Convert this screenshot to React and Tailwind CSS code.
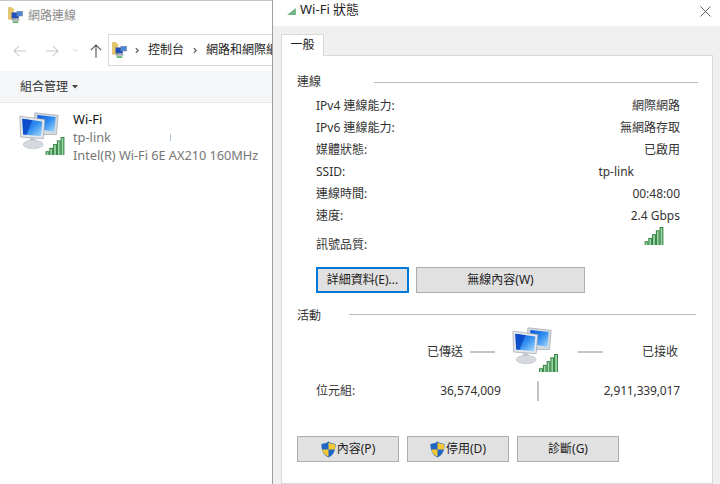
import React from "react";

const Font = '[font-family:"Noto_Sans","Noto_Sans_CJK_TC",sans-serif]';

function Computers({ className }) {
  return (
    <svg viewBox="0 0 48 48" className={className}>
      <defs>
        <linearGradient id="scr" x1="0" y1="0" x2="1" y2="1">
          <stop offset="0" stopColor="#0a4fd8" />
          <stop offset="0.5" stopColor="#2f8df0" />
          <stop offset="1" stopColor="#a9dcfb" />
        </linearGradient>
      </defs>
      <path d="M19 1 L47 4 L45 27 L30 27 L18 20Z" fill="#d5dadf" stroke="#9aa3ab" strokeWidth="0.8" />
      <path d="M22 3.5 L44 6 L42.5 24 L22 20Z" fill="url(#scr)" />
      <path d="M1 5 L31 9 L29 32 L2 30Z" fill="#e4e8ec" stroke="#98a1a9" strokeWidth="0.8" />
      <path d="M4 8 L28 11.5 L26.5 29 L5 27Z" fill="url(#scr)" />
      <path d="M4 8 L16 9.8 L9 27.4 L5 27Z" fill="#0b45c4" opacity="0.8" />
      <path d="M13 31 L20 31.5 L20 36 L13 36Z" fill="#c4c9ce" />
      <ellipse cx="17" cy="39" rx="12" ry="5" fill="#d6dade" stroke="#b2b8be" strokeWidth="0.6" />
    </svg>
  );
}

function Signal({ className }) {
  const bars = [
    [0, 19, 5],
    [5, 14.5, 9.5],
    [10, 9.5, 14.5],
    [15, 4.5, 19.5],
    [20, 0, 24],
  ];
  return (
    <svg viewBox="0 0 25 24" className={className}>
      {bars.map(([x, y, h], i) => (
        <g key={i}>
          <rect x={x} y={y} width={5} height={h} fill="#2c7a3a" />
          <rect x={x + 1.3} y={y + 1.2} width={2.4} height={h - 1.2} fill="#9ad8a5" />
        </g>
      ))}
    </svg>
  );
}

function Shield() {
  return (
    <svg viewBox="0 0 16 18" className="w-[15px] h-[17px] shrink-0">
      <path d="M8 0.5 C10 2 12.5 2.8 15.5 3 C15.8 10 13 15 8 17.5 C3 15 0.2 10 0.5 3 C3.5 2.8 6 2 8 0.5Z" fill="#1f66c4" />
      <path d="M8 1.5 V9 H15 C15.2 7 15.1 5 15 3.4 C12.5 3.2 10 2.6 8 1.5Z" fill="#f7c633" />
      <path d="M8 9 V16.8 C4.5 15 2 12.5 1.2 9Z" fill="#f7c633" />
    </svg>
  );
}

function FolderNet({ className }) {
  return (
    <svg viewBox="0 0 16 18" className={className}>
      <path d="M0.5 0.5 H4 L5 2 H6 V13 H0.5Z" fill="#e9c766" stroke="#c9a548" strokeWidth="0.5" />
      <rect x="4" y="6" width="7.5" height="6" fill="#1f4fb8" stroke="#6f7f96" strokeWidth="0.6" />
      <rect x="9.5" y="4.5" width="6" height="5" fill="#4a86dc" stroke="#6f7f96" strokeWidth="0.6" />
      <rect x="4" y="13" width="8" height="1.4" fill="#8a929a" />
      <rect x="5" y="15.2" width="6" height="1.6" fill="#41a85a" />
    </svg>
  );
}

function Chevron() {
  return (
    <svg viewBox="0 0 5 8" className="w-[4px] h-[7px] shrink-0" fill="none" stroke="#555" strokeWidth="1.5">
      <path d="M1 1l3 3-3 3" />
    </svg>
  );
}

function Row({ label, value, valueClass = "" }) {
  return (
    <div className="flex h-[22px] items-center justify-between pl-[19px] pr-[18px]">
      <span>{label}</span>
      <span className={valueClass}>{value}</span>
    </div>
  );
}

function Btn({ w, children, focus }) {
  return (
    <button
      className={`${w} h-[26px] flex items-center justify-center gap-[1px] bg-[#e1e1e1] text-[#222] text-[12px] border ${
        focus ? "border-[#0078d7] border-2" : "border-[#adadad]"
      }`}
    >
      {children}
    </button>
  );
}

export default function App() {
  return (
    <div className={`${Font} w-[720px] h-[484px] flex overflow-hidden bg-white text-[#333]`}>
      {/* Explorer window */}
      <div className="w-[272px] h-full shrink-0 flex flex-col border-t border-[#c4c4c4] bg-white overflow-hidden">
        <div className="h-[29px] flex items-center pl-[8px] gap-[5px] text-[12px] text-[#8a8a8a]">
          <FolderNet className="w-[15px] h-[17px]" />
          <span>網路連線</span>
        </div>
        <div className="h-[41px] flex items-center">
          <div className="w-[108px] pl-[13px] flex items-center shrink-0">
            <svg viewBox="0 0 16 14" className="w-[14px] h-[12px] text-[#c8c8c8]" fill="none" stroke="currentColor" strokeWidth="1.2">
              <path d="M15 7H1M7 1L1 7l6 6" />
            </svg>
            <svg viewBox="0 0 16 14" className="w-[14px] h-[12px] ml-[18px] text-[#c8c8c8]" fill="none" stroke="currentColor" strokeWidth="1.2">
              <path d="M1 7h14M9 1l6 6-6 6" />
            </svg>
            <svg viewBox="0 0 8 6" className="w-[7px] h-[5px] ml-[13px] text-[#c8c8c8]" fill="none" stroke="currentColor" strokeWidth="1">
              <path d="M1 1l3 3 3-3" />
            </svg>
            <svg viewBox="0 0 14 16" className="w-[12px] h-[14px] ml-[11px] text-[#444]" fill="none" stroke="currentColor" strokeWidth="1.2">
              <path d="M7 16V1M1 7l6-6 6 6" />
            </svg>
          </div>
          <div className="flex-1 h-[32px] flex items-center border border-r-0 border-[#d9d9d9] pl-[2px] whitespace-nowrap overflow-hidden text-[12px] text-[#222] -mt-[1px]">
            <FolderNet className="w-[15px] h-[17px] shrink-0 ml-[1px]" />
            <span className="ml-[8px] mr-[9px] flex"><Chevron /></span>
            <span>控制台</span>
            <span className="ml-[9px] mr-[9px] flex"><Chevron /></span>
            <span>網路和網際網路</span>
          </div>
        </div>
        <div className="h-[32px] bg-[#f5f6f7] flex items-center pl-[20px] text-[12px] text-[#333] border-b border-[#e8e8e8]">
          <span>組合管理</span>
          <svg viewBox="0 0 6 4" className="w-[6px] h-[4px] ml-[4px]">
            <path d="M0 0h6L3 3.5z" fill="#444" />
          </svg>
        </div>
        <div className="flex pl-[18px] pt-[7px]">
          <div className="relative w-[50px] h-[50px] shrink-0">
            <Computers className="w-[40px] h-[40px] ml-[1px] mt-[2px]" />
            <Signal className="absolute left-[26px] top-[27px] w-[22px] h-[18px]" />
          </div>
          <div className="ml-[5px] text-[12.8px] leading-[18px] whitespace-nowrap">
            <div className="text-[#111]">Wi-Fi</div>
            <div className="relative text-[#777]">
              tp-link
              <span className="absolute left-[97px] top-[6px] w-[1px] h-[7px] bg-[#a8c4dc]" />
            </div>
            <div className="text-[#777] tracking-[-0.05px]">Intel(R) Wi-Fi 6E AX210 160MHz</div>
          </div>
        </div>
      </div>

      {/* Status dialog */}
      <div className="w-[448px] h-full shrink-0 flex flex-col bg-[#f0f0f0] border-l border-[#a0a0a0]">
        <div className="h-[26px] bg-white flex items-center justify-between pl-[14px] pr-[9px] text-[13px] text-[#222]">
          <div className="flex items-center gap-[4px] -mt-[6px]">
            <svg viewBox="0 0 10 8" className="w-[9px] h-[7px] mt-[3px]">
              <path d="M0 8 L10 0 V8Z" fill="#6fb583" />
            </svg>
            <span>Wi-Fi 狀態</span>
          </div>
          <svg viewBox="0 0 12 12" className="w-[11px] h-[11px] -mt-[4px]" fill="none" stroke="#444" strokeWidth="0.9">
            <path d="M0.5 0.5l11 11M11.5 0.5l-11 11" />
          </svg>
        </div>
        <div className="pl-[8px] pt-[8px] pr-[7px] flex-1 flex flex-col">
          <div className="w-[43px] h-[22px] bg-white border border-b-0 border-[#d9d9d9] flex items-center justify-center text-[12px] text-[#222] relative z-10 -mb-[1px] pb-[2px]">
            一般
          </div>
          <div className="flex-1 bg-white border border-[#d9d9d9] pl-[15px] pr-[14px] text-[12px] text-[#333]">
            <div className="flex items-center h-[20px] mt-[16px]">
              <span className="w-[77px]">連線</span>
              <div className="flex-1 h-[1px] bg-[#b9b9b9]" />
            </div>
            <div className="mt-[3px]">
              <Row label="IPv4 連線能力:" value="網際網路" />
              <Row label="IPv6 連線能力:" value="無網路存取" />
              <Row label="媒體狀態:" value="已啟用" />
              <Row label="SSID:" value="tp-link" valueClass="mr-[46px]" />
              <Row label="連線時間:" value="00:48:00" />
              <Row label="速度:" value="2.4 Gbps" />
              <div className="flex h-[35px] justify-between pl-[19px] pr-[33px]">
                <span className="mt-[9px]">訊號品質:</span>
                <Signal className="w-[22px] h-[18px]" />
              </div>
            </div>
            <div className="flex gap-[7px] ml-[19px] mt-[5px]">
              <Btn w="w-[93px]" focus>詳細資料(E)...</Btn>
              <Btn w="w-[169px]">無線內容(W)</Btn>
            </div>
            <div className="flex items-center h-[20px] mt-[13px]">
              <span className="w-[52px]">活動</span>
              <div className="flex-1 h-[1px] bg-[#b9b9b9] -mt-[4px] mr-[2px]" />
            </div>
            <div className="flex items-start h-[49px] mt-[2px] pl-[130px] relative">
              <span className="mt-[15px] w-[43px]">已傳送</span>
              <div className="w-[25px] h-[2px] bg-[#c4c4c4] mt-[23px]" />
              <div className="relative w-[48px] h-[49px] ml-[17px] -mt-[1px]">
                <Computers className="w-[40px] h-[40px]" />
                <Signal className="absolute left-[25px] top-[27px] w-[23px] h-[18px]" />
              </div>
              <div className="w-[25px] h-[2px] bg-[#c4c4c4] mt-[23px] ml-[18px]" />
              <span className="mt-[15px] ml-auto mr-[20px]">已接收</span>
            </div>
            <div className="flex items-center h-[22px] mt-[3px] pl-[19px] pr-[18px] relative">
              <span>位元組:</span>
              <span className="ml-auto mr-[36px] tracking-[-0.1px]">36,574,009</span>
              <div className="w-[2px] h-[20px] bg-[#c4c4c4]" />
              <span className="ml-[65px] tracking-[-0.15px]">2,911,339,017</span>
            </div>
            <div className="flex gap-[8px] mt-[34px]">
              <Btn w="w-[102px]"><Shield />內容(P)</Btn>
              <Btn w="w-[102px]"><Shield />停用(D)</Btn>
              <Btn w="w-[102px]">診斷(G)</Btn>
            </div>
          </div>
        </div>
      </div>
    </div>
  );
}
